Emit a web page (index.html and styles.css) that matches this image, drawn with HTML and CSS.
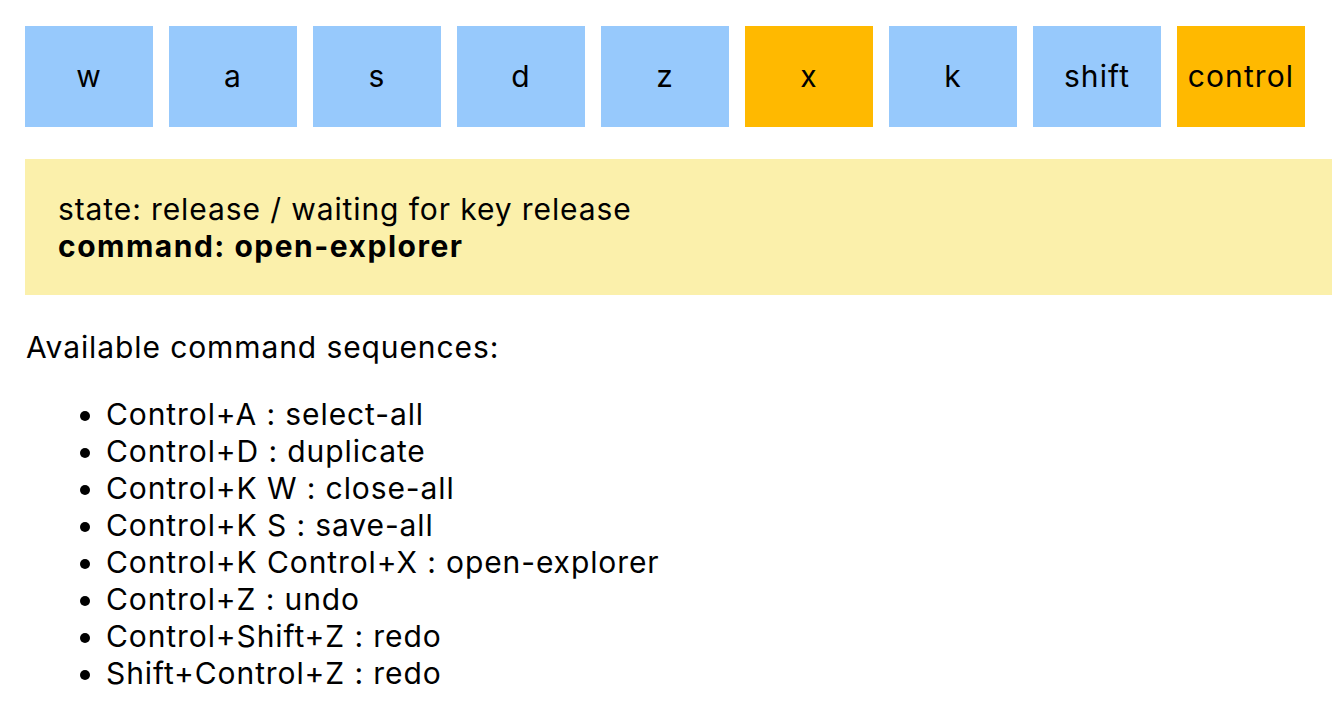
FILE: index.html
```html
<!DOCTYPE html>
<html>
<head>
<meta charset="utf-8">
<link rel="stylesheet" href="styles.css">
</head>
<body>
<div class="keys">
  <div class="key">w</div>
  <div class="key">a</div>
  <div class="key">s</div>
  <div class="key">d</div>
  <div class="key">z</div>
  <div class="key active">x</div>
  <div class="key">k</div>
  <div class="key">shift</div>
  <div class="key active">control</div>
</div>
<div class="status">
  <div>state: release / waiting for key release</div>
  <div class="cmd">command: open-explorer</div>
</div>
<p class="heading">Available command sequences:</p>
<ul class="list">
  <li>Control+A : select-all</li>
  <li>Control+D : duplicate</li>
  <li>Control+K W : close-all</li>
  <li>Control+K S : save-all</li>
  <li>Control+K Control+X : open-explorer</li>
  <li>Control+Z : undo</li>
  <li>Control+Shift+Z : redo</li>
  <li>Shift+Control+Z : redo</li>
</ul>
</body>
</html>
```
FILE: styles.css
```css
html, body {
  margin: 0;
  padding: 0;
  background: #ffffff;
  overflow: hidden;
}
body {
  padding: 26px 0 0 25px;
  font-family: Inter, "Liberation Sans", sans-serif;
  font-size: 30px;
  line-height: 37px;
  letter-spacing: 0.9px;
  font-feature-settings: "calt" 0;
  color: #000000;
}
.keys {
  display: flex;
  gap: 16px;
}
.key {
  width: 128px;
  height: 101px;
  background: #97c9fc;
  display: flex;
  align-items: center;
  justify-content: center;
  flex: none;
  letter-spacing: 1.1px;
}
.key.active {
  background: #ffb900;
}
.status {
  margin-top: 32px;
  background: #fbf0ab;
  padding: 32px 33px 30px;
}
.cmd {
  font-weight: bold;
  letter-spacing: 1.5px;
}
.heading {
  margin: 34px 0 0 1px;
}
.list {
  margin: 30px 0 0 0;
  padding-left: 81px;
}
```
